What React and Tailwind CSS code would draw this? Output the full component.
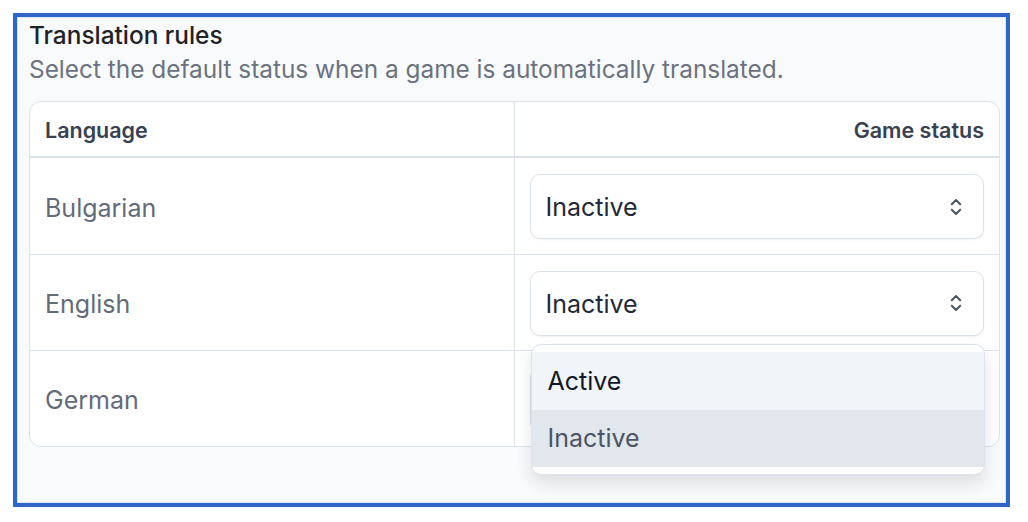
import { useState } from 'react';

const languages = ['Bulgarian', 'English', 'German'];
const statuses = ['Active', 'Inactive'];

function UpDownChevron() {
  return (
    <svg width="14" height="20" viewBox="0 0 14 20" fill="none" className="text-[#4b5563]">
      <path d="M2.8 7.2 7 3l4.2 4.2" stroke="currentColor" strokeWidth="2" strokeLinecap="round" strokeLinejoin="round" />
      <path d="M2.8 12.8 7 17l4.2-4.2" stroke="currentColor" strokeWidth="2" strokeLinecap="round" strokeLinejoin="round" />
    </svg>
  );
}

function StatusSelect({ value, open }) {
  return (
    <div className="relative">
      <div className="flex h-[65px] items-center justify-between rounded-[10px] border border-[#dde3ea] bg-white pl-[15px] pr-[20px] shadow-[0_1px_2px_rgba(15,23,42,0.06)]">
        <span className="pt-[3px] text-[25px] text-[#1f2937]">{value}</span>
        <UpDownChevron />
      </div>
      {open && (
        <div className="absolute left-px right-[-1px] top-full z-10 mt-2 rounded-[10px] border border-[#dde3ea] bg-white py-[7px] shadow-[0_8px_16px_rgba(15,23,42,0.12)]">
          {statuses.map((s) => (
            <div
              key={s}
              className={
                s === value
                  ? 'flex h-[57px] items-center bg-[#e2e7ee] px-4 pt-[2px] text-[25px] text-[#4b5563]'
                  : 'flex h-[58px] items-center bg-[#f1f4f8] px-4 pt-[3px] text-[25px] text-[#111827]'
              }
            >
              {s}
            </div>
          ))}
        </div>
      )}
    </div>
  );
}

export default function App() {
  const [openRow] = useState('English');

  return (
    <div className="min-h-[522px] bg-white p-[13px] font-['Inter',sans-serif]">
      <div className="h-[494px] w-[997px] border-4 border-[#2f67c9]">
        <div className="h-full border border-[#dbe3ee] bg-[#f9fafb] pl-[11px] pr-[5px]">
          <h2 className="text-[24.4px] font-medium leading-[34px] text-[#1f2328]">Translation rules</h2>
          <p className="text-[24.4px] leading-[34px] text-[#6b7280]">
            Select the default status when a game is automatically translated.
          </p>

          <div className="mt-[15px] rounded-[12px] border border-[#dde3ea] bg-white">
            <div className="grid h-[56px] grid-cols-2 border-b-2 border-[#dde3ea]">
              <div className="flex items-center border-r border-[#dde3ea] px-[15px] pt-[2px] text-[21.5px] font-semibold text-[#374151]">
                Language
              </div>
              <div className="flex items-center justify-end px-[15px] pt-[2px] text-[21.5px] font-semibold text-[#374151]">
                Game status
              </div>
            </div>
            {languages.map((lang, i) => (
              <div
                key={lang}
                className={i === 0 ? 'grid h-[96px] grid-cols-2' : 'grid h-[96px] grid-cols-2 border-t border-[#dde3ea]'}
              >
                <div className="flex items-center border-r border-[#dde3ea] px-[15px] pt-[5px] text-[25px] text-[#646b78]">
                  {lang}
                </div>
                <div className="flex flex-col justify-center px-[15px] pt-[1px]">
                  <StatusSelect value="Inactive" open={openRow === lang} />
                </div>
              </div>
            ))}
          </div>
        </div>
      </div>
    </div>
  );
}
